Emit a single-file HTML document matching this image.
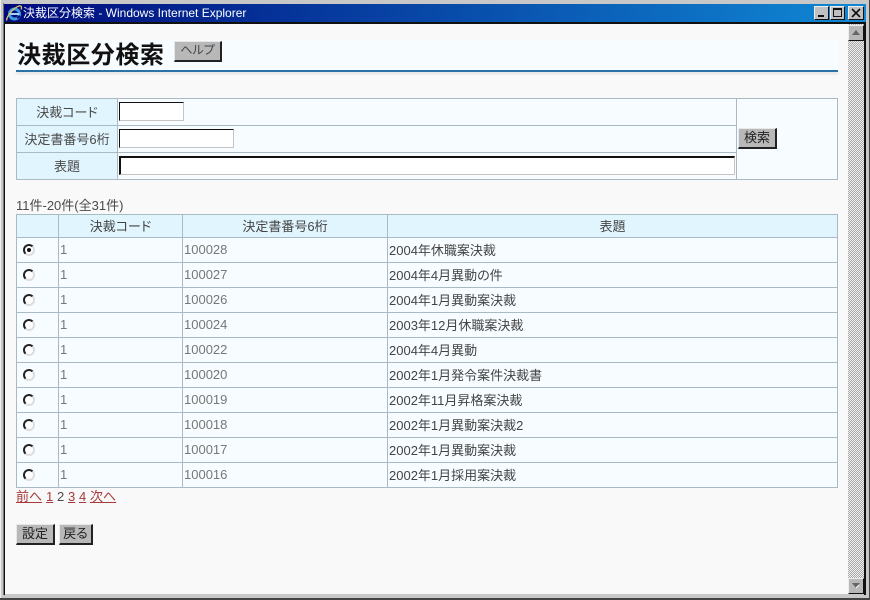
<!DOCTYPE html>
<html lang="ja"><head><meta charset="utf-8"><title>決裁区分検索</title>
<style>
html,body{margin:0;padding:0}
body{width:870px;height:600px;position:relative;overflow:hidden;background:#c8c8c8;font-family:"Liberation Sans","Noto Sans CJK JP",sans-serif;font-size:13px;color:#4a4a4a;font-feature-settings:"palt"}
.a{position:absolute}
.t{position:absolute;white-space:nowrap;line-height:16px}
.btn{position:absolute;box-sizing:border-box;background:#b8b8b8;border-style:solid;border-width:1px 2px 2px 1px;border-color:#e8e8e8 #222 #222 #e8e8e8;text-align:center;color:#222;line-height:17px;font-size:13px}
.inp{position:absolute;box-sizing:border-box;background:#fff;border-style:solid;border-width:2px 1px 1px 2px;border-color:#111 #c4c4c4 #c4c4c4 #111}
table{position:absolute;border-collapse:collapse;table-layout:fixed;background:#f6fcff}
td,th{box-sizing:border-box;border:1px solid #a9bac4;padding:0;font-weight:normal;white-space:nowrap;overflow:hidden}
th{background:#e1f5fe;text-align:center;color:#444;padding-bottom:2px}
#r td{height:25px;padding-left:1px;padding-bottom:1px;color:#444}
#r th{height:23px}
#r td.n{color:#777}
#r td:first-child{padding:0;position:relative}
.ra{display:block;position:absolute;left:6px;top:6px;box-sizing:border-box;width:12px;height:12px;border-radius:50%;background:#fff;border:2px solid;border-color:#222 #ddd #ddd #222}
.on:after{content:"";position:absolute;left:2px;top:2px;width:4px;height:4px;border-radius:50%;background:#111}
#f td{height:27px}
#f .l{background:#e1f5fe;text-align:center;padding-bottom:2px}
a{color:#a83a3a;text-decoration:underline}
.w{position:absolute;box-sizing:border-box;top:6px;height:14px;background:#c0c0c0;border-style:solid;border-width:1px;border-color:#eee #111 #111 #eee}
</style></head><body>
<div class="a" style="left:0;top:0;width:1px;height:600px;background:#eee"></div>
<div class="a" style="left:869px;top:0;width:1px;height:600px;background:#444"></div>
<div class="a" style="left:0;top:598px;width:870px;height:2px;background:#444"></div>
<div class="a" style="left:3px;top:3px;width:1px;height:592px;background:#777"></div>
<div class="a" style="left:4px;top:4px;width:1px;height:591px;background:#111"></div>
<div class="a" style="left:4px;top:22px;width:862px;height:2px;background:#111"></div>
<div class="a" style="left:864px;top:22px;width:2px;height:573px;background:#111"></div>
<div class="a" style="left:4px;top:4px;width:862px;height:18px;background:linear-gradient(90deg,#000a7c,#1088d4)"></div>
<svg class="a" style="left:5px;top:4px" width="18" height="18" viewBox="0 0 18 18"><circle cx="9.500" cy="10" r="5" fill="none" stroke="#3f9be0" stroke-width="3"/><path d="M5 10h9.500" stroke="#9fd4f4" stroke-width="2"/><path d="M12 14l3-2" stroke="#0a0a7c" stroke-width="2"/><path d="M1.500 16.500C2 12 8 4 14 2c2.500-.8 3 1.500 2 3.500" fill="none" stroke="#d9c060" stroke-width="1.400"/></svg>
<div class="t" style="left:23px;top:5px;color:#fff;font-size:12px;font-feature-settings:normal">決裁区分検索 - Windows Internet Explorer</div>
<div class="w" style="left:814px;width:15px"><div class="a" style="left:3px;top:8px;width:6px;height:2px;background:#111"></div></div>
<div class="w" style="left:830px;width:15px"><div class="a" style="left:2px;top:1px;width:9px;height:9px;box-sizing:border-box;border:1px solid #111;border-top-width:2px"></div></div>
<div class="w" style="left:848px;width:16px"><svg class="a" style="left:2px;top:1px" width="10" height="10"><path d="M1 1l8 8M9 1l-8 8" stroke="#111" stroke-width="1.600"/></svg></div>

<div class="a" style="left:5px;top:24px;width:843px;height:570px;background:#f9f9f9"></div>
<div class="a" style="left:848px;top:24px;width:16px;height:570px;background:repeating-conic-gradient(#aaa 0 25%,#eee 0 50%) 0 0/2px 2px"></div>
<div class="w" style="left:848px;top:25px;width:16px;height:16px;background:#b8b8b8"><svg class="a" style="left:2px;top:3px" width="10" height="8"><path d="M5 1L9 6H1z" fill="#666"/></svg></div>
<div class="w" style="left:848px;top:578px;width:16px;height:16px;background:#b8b8b8"><svg class="a" style="left:2px;top:3px" width="10" height="8"><path d="M1 1h8L5 6z" fill="#666"/><path d="M5 6l3-3" stroke="#fff"/></svg></div>

<div class="a" style="left:16px;top:40px;width:822px;height:30px;background:#f6fcff"></div>
<div class="a" style="left:16px;top:70px;width:822px;height:2px;background:#2a72a8;box-shadow:0 2px 2px #ddd"></div>
<div class="t" style="left:17px;top:42px;font-size:24px;line-height:28px;font-weight:bold;color:#111;letter-spacing:.6px;font-feature-settings:normal">決裁区分検索</div>
<div class="btn" style="left:174px;top:41px;width:48px;height:21px;font-size:12px;line-height:16px;color:#444">ヘルプ</div>

<table id="f" style="left:16px;top:98px;width:821px">
<colgroup><col style="width:101px"><col style="width:619px"><col style="width:101px"></colgroup>
<tr><td class="l">決裁コード</td><td style="background:#f6fcff"></td><td rowspan="3"></td></tr>
<tr><td class="l">決定書番号6桁</td><td></td></tr>
<tr><td class="l">表題</td><td></td></tr>
</table>
<div class="inp" style="left:119px;top:102px;width:65px;height:19px;border-width:1px"></div>
<div class="inp" style="left:119px;top:129px;width:115px;height:19px;border-width:1px"></div>
<div class="inp" style="left:119px;top:156px;width:616px;height:19px"></div>
<div class="btn" style="left:738px;top:128px;width:39px;height:21px">検索</div>

<div class="t" style="left:16px;top:198px">11件-20件(全31件)</div>

<table id="r" style="left:16px;top:214px;width:821px">
<colgroup><col style="width:42px"><col style="width:124px"><col style="width:205px"><col style="width:450px"></colgroup>
<tr><th></th><th>決裁コード</th><th>決定書番号6桁</th><th>表題</th></tr>
<tr><td><i class="ra on"></i></td><td class="n">1</td><td class="n">100028</td><td>2004年休職案決裁</td></tr>
<tr><td><i class="ra"></i></td><td class="n">1</td><td class="n">100027</td><td>2004年4月異動の件</td></tr>
<tr><td><i class="ra"></i></td><td class="n">1</td><td class="n">100026</td><td>2004年1月異動案決裁</td></tr>
<tr><td><i class="ra"></i></td><td class="n">1</td><td class="n">100024</td><td>2003年12月休職案決裁</td></tr>
<tr><td><i class="ra"></i></td><td class="n">1</td><td class="n">100022</td><td>2004年4月異動</td></tr>
<tr><td><i class="ra"></i></td><td class="n">1</td><td class="n">100020</td><td>2002年1月発令案件決裁書</td></tr>
<tr><td><i class="ra"></i></td><td class="n">1</td><td class="n">100019</td><td>2002年11月昇格案決裁</td></tr>
<tr><td><i class="ra"></i></td><td class="n">1</td><td class="n">100018</td><td>2002年1月異動案決裁2</td></tr>
<tr><td><i class="ra"></i></td><td class="n">1</td><td class="n">100017</td><td>2002年1月異動案決裁</td></tr>
<tr><td><i class="ra"></i></td><td class="n">1</td><td class="n">100016</td><td>2002年1月採用案決裁</td></tr>
</table>

<a class="t" href="#" style="left:16px;top:489px">前へ</a>
<a class="t" href="#" style="left:46px;top:489px">1</a>
<span class="t" style="left:57px;top:489px">2</span>
<a class="t" href="#" style="left:68px;top:489px">3</a>
<a class="t" href="#" style="left:79px;top:489px">4</a>
<a class="t" href="#" style="left:90px;top:489px">次へ</a>

<div class="btn" style="left:16px;top:524px;width:39px;height:21px">設定</div>
<div class="btn" style="left:59px;top:524px;width:34px;height:21px">戻る</div>
</body></html>
